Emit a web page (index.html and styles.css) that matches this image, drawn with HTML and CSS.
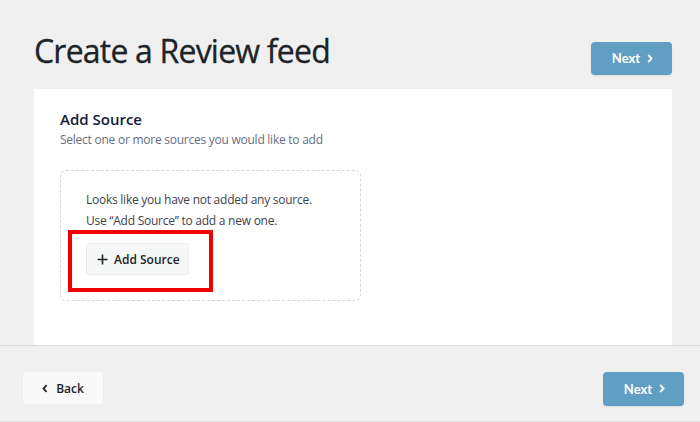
FILE: index.html
```html
<!DOCTYPE html>
<html>
<head>
<meta charset="utf-8">
<link rel="stylesheet" href="styles.css">
</head>
<body>
<div class="page">
  <header class="header">
    <h1 class="title">Create a Review feed</h1>
    <button class="btn-next btn-next-top">Next <svg class="chev" width="6" height="9" viewBox="0 0 6 9"><path d="M1.2 1 L4.6 4.5 L1.2 8" stroke="#fff" stroke-width="1.8" fill="none"/></svg></button>
  </header>
  <main class="card">
    <h2 class="card-title">Add Source</h2>
    <p class="card-sub">Select one or more sources you would like to add</p>
    <div class="empty-box">
      <p class="empty-text">Looks like you have not added any source.</p>
      <p class="empty-text">Use “Add Source” to add a new one.</p>
      <div class="highlight">
        <button class="btn-add">
          <svg class="plus" width="11" height="11" viewBox="0 0 11 11"><path d="M5.5 0.5v10M0.5 5.5h10" stroke="#1d2327" stroke-width="1.6" fill="none"/></svg>
          Add Source
        </button>
      </div>
    </div>
  </main>
  <footer class="footer">
    <button class="btn-back"><svg class="chev-l" width="6" height="9" viewBox="0 0 6 9"><path d="M4.6 1.2 L1.5 4.5 L4.6 7.8" stroke="#1d2327" stroke-width="1.8" fill="none"/></svg> Back</button>
    <button class="btn-next btn-next-bottom">Next <svg class="chev" width="6" height="9" viewBox="0 0 6 9"><path d="M1.2 1 L4.6 4.5 L1.2 8" stroke="#fff" stroke-width="1.8" fill="none"/></svg></button>
  </footer>
</div>
</body>
</html>
```
FILE: styles.css
```css
* { box-sizing: border-box; }
html, body { margin: 0; padding: 0; }
body {
  background: #f0f0f1;
  font-family: "Open Sans", "Noto Sans", sans-serif;
  color: #1d2327;
  width: 700px;
  height: 422px;
  overflow: hidden;
}
.page {
  display: flex;
  flex-direction: column;
  height: 422px;
}
.header {
  height: 89px;
  display: flex;
  justify-content: space-between;
  padding: 0 28px 0 34px;
}
.title {
  margin: 30px 0 0 0;
  font-size: 32px;
  font-weight: 400;
  line-height: 42px;
  letter-spacing: -0.8px;
  color: #1d2327;
  -webkit-text-stroke: 0.3px #1d2327;
}
.btn-next {
  border: none;
  border-radius: 4px;
  background: #609fc3;
  color: #fff;
  font-family: "Lato", sans-serif;
  font-weight: 700;
  font-size: 13px;
  width: 81px;
  height: 33px;
  display: flex;
  align-items: center;
  justify-content: center;
  gap: 7px;
  padding: 0 0 1px 2px;
  box-shadow: 0 1px 2px rgba(0,0,0,0.08);
}
.chev { display: block; }
.btn-next-top { margin-top: 42px; }
.card {
  height: 256px;
  margin: 0 28px 0 34px;
  background: #fff;
  padding: 20px 26px;
}
.card-title {
  margin: 0;
  font-size: 15px;
  font-weight: 600;
  line-height: 20px;
  color: #141b38;
}
.card-sub {
  margin: 2px 0 0 0;
  font-size: 12px;
  line-height: 18px;
  letter-spacing: -0.25px;
  color: #696d80;
}
.empty-box {
  margin-top: 21px;
  width: 301px;
  height: 131px;
  border: 1px dashed #d6d7dc;
  border-radius: 6px;
  padding: 18px 0 0 25px;
}
.empty-text {
  margin: 0;
  font-size: 12px;
  line-height: 21px;
  letter-spacing: -0.25px;
  color: #3c434a;
}
.highlight {
  margin: -1px 0 0 -18px;
  width: 145px;
  height: 62px;
  border: 4px solid #ee0000;
  padding: 9px 0 0 14px;
}
.btn-add {
  width: 103px;
  height: 32px;
  background: #f6f7f7;
  border: 1px solid #ececee;
  border-radius: 3px;
  display: flex;
  align-items: center;
  gap: 6px;
  padding: 0 0 0 10px;
  font-family: "Open Sans", sans-serif;
  font-size: 12px;
  font-weight: 600;
  color: #1d2327;
}
.footer {
  flex: 1;
  border-top: 1px solid #dcdcde;
  border-bottom: 1px solid #e2e2e4;
  display: flex;
  justify-content: space-between;
  align-items: flex-start;
  padding: 26px 16px 0 23px;
}
.btn-back {
  width: 80px;
  height: 32px;
  border: none;
  border-radius: 3px;
  background: #f9f9f9;
  display: flex;
  align-items: center;
  justify-content: center;
  gap: 8px;
  font-family: "Open Sans", sans-serif;
  font-size: 12px;
  font-weight: 600;
  color: #1d2327;
  box-shadow: 0 0 1px rgba(0,0,0,0.05);
}
.chev-l { display: block; }
.btn-next-bottom { height: 34px; }
```
